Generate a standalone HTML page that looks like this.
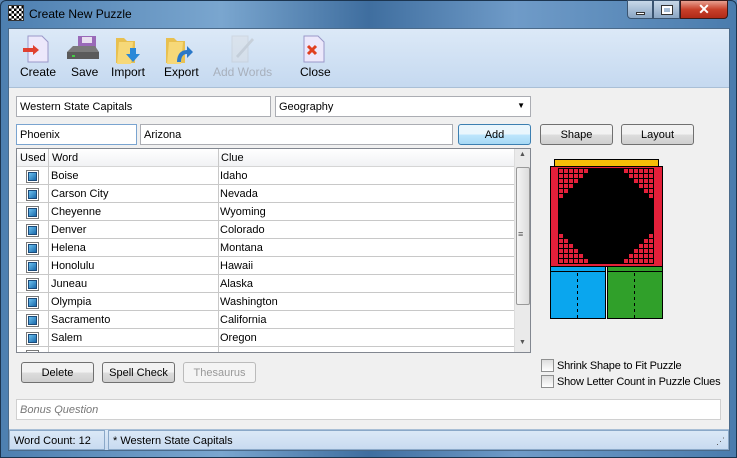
<!DOCTYPE html><html><head><style>
*{box-sizing:border-box;margin:0;padding:0}
body{width:737px;height:458px;overflow:hidden;font-family:"Liberation Sans",sans-serif;font-size:11px;background:#5a86b4;position:relative}
.a{position:absolute}
.frame{left:0;top:0;width:737px;height:458px;background:linear-gradient(90deg,#4d7fb0 0%,#7aa6cf 30%,#3f6e9f 50%,#6f9bc8 70%,#4a7cad 100%);border:1px solid #1c3550;border-radius:6px 6px 0 0}
.client{left:8px;top:28px;width:722px;height:423px;background:#f0f0f0;border:1px solid #4a6a8a}
.tb{left:9px;top:29px;width:720px;height:59px;background:linear-gradient(#dce9f7,#c5d9f0);border-bottom:1px solid #a9bfd6}
.tl{top:65px;font-size:12px;color:#000;text-align:center}
.in{background:#fff;border:1px solid #abadb3;height:21px;padding:4px 3px 0;font-size:11px}
.btn{border:1px solid #707070;border-radius:3px;background:linear-gradient(#f2f2f2 50%,#dddddd 50%,#cfcfcf);text-align:center;font-size:11px;line-height:19px;height:21px}
.row{position:absolute;left:0;width:497px;height:18px;border-bottom:1px solid #c8c8c8;font-size:11px;line-height:19px}
.cb{position:absolute;left:9px;top:3px;width:13px;height:13px;border:1px solid #777;background:#fff}
.cb i{position:absolute;left:1px;top:1px;width:9px;height:9px;background:linear-gradient(135deg,#6ac0f0,#1a6aaa);border:1px solid #1a4a7a}
.ck{font-size:11px;letter-spacing:-0.2px}
</style></head><body>
<div class="a frame"></div>
<div class="a" style="left:8px;top:5px;width:16px;height:16px;background:repeating-conic-gradient(#000 0 25%,#fff 0 50%) 0 0/5px 5px;border:1px solid #333"></div>
<div class="a" style="left:29px;top:7px;font-size:12px;color:#000">Create New Puzzle</div>
<div class="a" style="left:627px;top:0;width:26px;height:19px;border:1px solid #3a5470;border-radius:0 0 0 4px;background:linear-gradient(#c8d8e8,#8aa6c4)"><div class="a" style="left:8px;top:11px;width:9px;height:3px;background:#fff;border:1px solid #333"></div></div>
<div class="a" style="left:653px;top:0;width:27px;height:19px;border:1px solid #3a5470;background:linear-gradient(#c8d8e8,#8aa6c4)"><div class="a" style="left:8px;top:5px;width:10px;height:8px;border:2px solid #fff;outline:1px solid #333"></div></div>
<div class="a" style="left:680px;top:0;width:48px;height:19px;border:1px solid #3a1a1a;border-radius:0 0 4px 0;background:linear-gradient(#e8a090,#c8402a 50%,#b02a18);color:#fff;font-weight:bold;font-size:14px;text-align:center;line-height:17px">✕</div>
<div class="a client"></div>
<div class="a tb"></div>
<svg class="a" style="left:20px;top:34px" width="34" height="30"><path d="M8 2h14l6 6v20H8z" fill="#ece8fb" stroke="#9a98c8"/><path d="M3 14h10v-3l6 5-6 5v-3H3z" fill="#e04030"/></svg>
<svg class="a" style="left:64px;top:34px" width="36" height="30"><path d="M14 2h18v16H14z" fill="#9a6ab8"/><rect x="18" y="3" width="10" height="6" fill="#e8e0f0"/><path d="M3 18l6-6h22l4 6v7H3z" fill="#7a7a7a"/><rect x="3" y="18" width="32" height="7" fill="#5a5a5a"/><rect x="8" y="21" width="3" height="2" fill="#4c4"/></svg>
<svg class="a" style="left:113px;top:34px" width="32" height="32"><path d="M3 4h8l3 3h8v22H3z" fill="#e8c050"/><path d="M6 8h14l-2 22H4z" fill="#f6d878"/><path d="M17 14h6v6h4l-7 8-7-8h4z" fill="#2a88d8"/></svg>
<svg class="a" style="left:163px;top:34px" width="32" height="32"><path d="M3 4h8l3 3h8v22H3z" fill="#e8c050"/><path d="M6 8h14l-2 22H4z" fill="#f6d878"/><path d="M14 28c0-8 4-12 10-12v-4l6 6-6 6v-4c-4 0-6 3-6 8z" fill="#2a78c8"/></svg>
<svg class="a" style="left:228px;top:34px" width="30" height="30" opacity=".35"><path d="M4 2h16v26H4z" fill="#ddd" stroke="#bbb"/><path d="M8 22L24 4l2 2L10 24z" fill="#aaa"/></svg>
<svg class="a" style="left:300px;top:34px" width="30" height="30"><path d="M4 2h14l6 6v20H4z" fill="#ece8fb" stroke="#9a98c8"/><path d="M8 12l8 8M16 12l-8 8" stroke="#e04020" stroke-width="3"/></svg>
<div class="a tl" style="left:20px">Create</div>
<div class="a tl" style="left:71px">Save</div>
<div class="a tl" style="left:111px">Import</div>
<div class="a tl" style="left:164px">Export</div>
<div class="a tl" style="left:213px;color:#a8b0bc">Add Words</div>
<div class="a tl" style="left:300px">Close</div>
<div class="a in" style="left:16px;top:96px;width:255px">Western State Capitals</div>
<div class="a in" style="left:275px;top:96px;width:256px">Geography<span style="position:absolute;right:5px;top:4px;font-size:8px">▼</span></div>
<div class="a in" style="left:16px;top:124px;width:121px;border-color:#7aa4d0">Phoenix</div>
<div class="a in" style="left:140px;top:124px;width:313px">Arizona</div>
<div class="a btn" style="left:458px;top:124px;width:73px;border-color:#3c7fb1;background:linear-gradient(#eaf6fd 50%,#bee6fd 50%,#a7d9f5);line-height:20px">Add</div>
<div class="a btn" style="left:540px;top:124px;width:73px;line-height:20px">Shape</div>
<div class="a btn" style="left:621px;top:124px;width:73px;line-height:20px">Layout</div>
<div class="a" style="left:16px;top:148px;width:515px;height:205px;background:#fff;border:1px solid #828790;overflow:hidden">
<div class="a" style="left:0;top:0;width:497px;height:18px;background:linear-gradient(#fff,#f1f2f4);border-bottom:1px solid #d5d5d5;line-height:19px"><span class="a" style="left:3px">Used</span><span class="a" style="left:35px">Word</span><span class="a" style="left:204px">Clue</span></div>
<div class="a" style="left:31px;top:0;width:1px;height:205px;background:#c8c8c8"></div>
<div class="a" style="left:201px;top:0;width:1px;height:205px;background:#c8c8c8"></div>
<div class="row" style="top:18px"><div class="cb"><i></i></div><span class="a" style="left:34px">Boise</span><span class="a" style="left:203px">Idaho</span></div>
<div class="row" style="top:36px"><div class="cb"><i></i></div><span class="a" style="left:34px">Carson City</span><span class="a" style="left:203px">Nevada</span></div>
<div class="row" style="top:54px"><div class="cb"><i></i></div><span class="a" style="left:34px">Cheyenne</span><span class="a" style="left:203px">Wyoming</span></div>
<div class="row" style="top:72px"><div class="cb"><i></i></div><span class="a" style="left:34px">Denver</span><span class="a" style="left:203px">Colorado</span></div>
<div class="row" style="top:90px"><div class="cb"><i></i></div><span class="a" style="left:34px">Helena</span><span class="a" style="left:203px">Montana</span></div>
<div class="row" style="top:108px"><div class="cb"><i></i></div><span class="a" style="left:34px">Honolulu</span><span class="a" style="left:203px">Hawaii</span></div>
<div class="row" style="top:126px"><div class="cb"><i></i></div><span class="a" style="left:34px">Juneau</span><span class="a" style="left:203px">Alaska</span></div>
<div class="row" style="top:144px"><div class="cb"><i></i></div><span class="a" style="left:34px">Olympia</span><span class="a" style="left:203px">Washington</span></div>
<div class="row" style="top:162px"><div class="cb"><i></i></div><span class="a" style="left:34px">Sacramento</span><span class="a" style="left:203px">California</span></div>
<div class="row" style="top:180px"><div class="cb"><i></i></div><span class="a" style="left:34px">Salem</span><span class="a" style="left:203px">Oregon</span></div>
<div class="row" style="top:198px"><div class="cb"><i></i></div></div>
<div class="a" style="left:497px;top:0;width:17px;height:205px;background:#eaeaea;border-left:1px solid #ddd"><div class="a" style="left:1px;top:18px;width:14px;height:138px;border:1px solid #999;border-radius:2px;background:linear-gradient(90deg,#f4f4f4,#dcdcdc)"></div><span class="a" style="left:4px;top:2px;font-size:7px;color:#555">▲</span><span class="a" style="left:4px;top:190px;font-size:7px;color:#555">▼</span><span class="a" style="left:3px;top:80px;font-size:9px;color:#555">≡</span></div>
</div>
<svg class="a" style="left:548px;top:156px" width="116" height="166">
<rect x="6.5" y="3.5" width="104" height="7" fill="#f5bd08" stroke="#000"/>
<rect x="2.5" y="10.5" width="112" height="100" fill="#e4203a" stroke="#000"/>
<rect x="10" y="12" width="96" height="96" fill="#000"/>
<g fill="#e4203a" id="g"></g>
<rect x="2.5" y="110.5" width="55" height="52" fill="#0aa6ee" stroke="#000"/>
<rect x="59.5" y="110.5" width="55" height="52" fill="#30a02a" stroke="#000"/>
<line x1="2" y1="115.5" x2="58" y2="115.5" stroke="#000"/><line x1="59" y1="115.5" x2="115" y2="115.5" stroke="#000"/>
<line x1="29.5" y1="117" x2="29.5" y2="162" stroke="#000" stroke-dasharray="3,3"/>
<line x1="86.5" y1="117" x2="86.5" y2="162" stroke="#000" stroke-dasharray="3,3"/>
</svg>
<script>
var g=document.getElementById('g'),s='';
for(var r=0;r<6;r++)for(var c=0;c<6-r;c++){
[[11+5*c,13+5*r],[101-5*c,13+5*r],[11+5*c,103-5*r],[101-5*c,103-5*r]].forEach(function(p){s+='<rect x="'+p[0]+'" y="'+p[1]+'" width="4" height="4"/>';});}
g.innerHTML=s;
</script>
<div class="a btn" style="left:21px;top:362px;width:73px;line-height:20px">Delete</div>
<div class="a btn" style="left:102px;top:362px;width:73px;line-height:20px">Spell Check</div>
<div class="a btn" style="left:183px;top:362px;width:73px;color:#999;border-color:#bbb;background:#f4f4f4;line-height:20px">Thesaurus</div>
<div class="a" style="left:541px;top:359px;width:13px;height:13px;border:1px solid #8e8f8f;background:linear-gradient(#ddd,#fff)"></div>
<div class="a ck" style="left:557px;top:360px">Shrink Shape to Fit Puzzle</div>
<div class="a" style="left:541px;top:375px;width:13px;height:13px;border:1px solid #8e8f8f;background:linear-gradient(#ddd,#fff)"></div>
<div class="a ck" style="left:557px;top:376px">Show Letter Count in Puzzle Clues</div>
<div class="a in" style="left:16px;top:399px;width:705px;color:#777;font-style:italic;border-color:#d0d0d0">Bonus Question</div>
<div class="a" style="left:9px;top:429px;width:720px;height:21px;background:linear-gradient(#dce9f7,#c7daf0);border-top:1px solid #a9bfd6"></div>
<div class="a" style="left:9px;top:430px;width:96px;height:20px;border:1px solid #8aa8c8;padding:4px 4px 0;font-size:11px">Word Count: 12</div>
<div class="a" style="left:108px;top:430px;width:621px;height:20px;border:1px solid #8aa8c8;padding:4px 4px 0;font-size:11px">* Western State Capitals</div>
<div class="a" style="left:716px;top:436px;font-size:9px;color:#555">⋰</div>
</body></html>
